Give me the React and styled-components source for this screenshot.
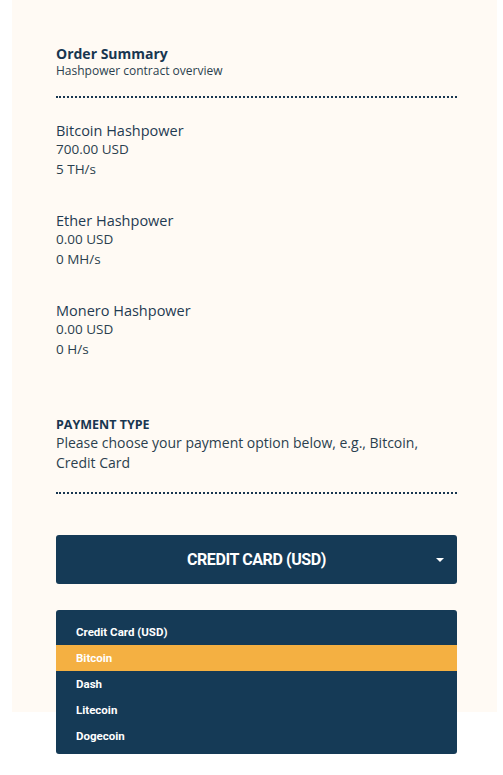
import styled, { createGlobalStyle } from 'styled-components';

const GlobalStyle = createGlobalStyle`
    body {
        margin: 0;
        background: #ffffff;
        font-family: "Open Sans", "Liberation Sans", sans-serif;
    }
`;

// cream card stops at 712px, the open menu hangs below it
const Panel = styled.div`
    margin-left: 12px;
    width: 485px;
    box-sizing: border-box;
    padding: 45px 40px 21px 44px;
    background: linear-gradient(to bottom, #fffaf4 712px, #ffffff 712px);
    color: #1c3a50;
`;

const Title = styled.div`
    font-size: 14px;
    line-height: 18px;
    font-weight: 700;
    color: #183650;
`;

const Subtitle = styled.div`
    font-size: 12px;
    line-height: 15px;
    color: #2b3f4e;
`;

const Dotted = styled.div`
    margin-top: ${(p) => p.$top || 19}px;
    border-bottom: 2px dotted #183650;
`;

const Items = styled.div`
    display: flex;
    flex-direction: column;
    gap: 34px;
    margin-top: 25px;
`;

const Item = styled.div`
    .name {
        font-size: 14.5px;
        line-height: 16px;
        color: #1f3b52;
    }

    .value {
        font-size: 13.5px;
        line-height: 20px;
        color: #2b3f4e;
    }
`;

const PaymentHead = styled.div`
    margin-top: 58px;

    .label {
        font-size: 12.5px;
        line-height: 16px;
        font-weight: 700;
        color: #183650;
    }

    .desc {
        font-size: 14px;
        line-height: 20px;
        color: #2b3f4e;
    }
`;

const Select = styled.div`
    position: relative;
    margin-top: 41px;
    height: 49px;
    border-radius: 3px;
    background: #153a56;
    display: flex;
    align-items: center;
    justify-content: center;
    color: #ffffff;
    font-family: Roboto, "Liberation Sans", sans-serif;
    font-size: 16px;
    font-weight: 700;
    letter-spacing: -0.4px;

    &::after {
        content: "";
        position: absolute;
        right: 13px;
        top: 23px;
        border-left: 4px solid transparent;
        border-right: 4px solid transparent;
        border-top: 4px solid #ffffff;
    }
`;

const Menu = styled.ul`
    list-style: none;
    margin: 26px 0 0;
    padding: 9px 0 5px;
    border-radius: 3px;
    background: #153a56;
`;

const Option = styled.li`
    height: 26px;
    display: flex;
    align-items: center;
    padding-left: 20px;
    color: #ffffff;
    font-family: Roboto, "Liberation Sans", sans-serif;
    font-size: 11.5px;
    font-weight: 700;
    background: ${(p) => (p.$active ? '#f4b042' : 'transparent')};
`;

const hashpower = [
    { name: 'Bitcoin Hashpower', price: '700.00 USD', rate: '5 TH/s' },
    { name: 'Ether Hashpower', price: '0.00 USD', rate: '0 MH/s' },
    { name: 'Monero Hashpower', price: '0.00 USD', rate: '0 H/s' },
];

const options = ['Credit Card (USD)', 'Bitcoin', 'Dash', 'Litecoin', 'Dogecoin'];

const App = () => {
    return (
        <>
            <GlobalStyle />
            <Panel>
                <Title>Order Summary</Title>
                <Subtitle>Hashpower contract overview</Subtitle>
                <Dotted $top={18} />
                <Items>
                    {hashpower.map((h) => (
                        <Item key={h.name}>
                            <div className="name">{h.name}</div>
                            <div className="value">{h.price}</div>
                            <div className="value">{h.rate}</div>
                        </Item>
                    ))}
                </Items>
                <PaymentHead>
                    <div className="label">PAYMENT TYPE</div>
                    <div className="desc">Please choose your payment option below, e.g., Bitcoin, Credit Card</div>
                </PaymentHead>
                <Dotted />
                <Select>CREDIT CARD (USD)</Select>
                <Menu>
                    {options.map((o) => (
                        <Option key={o} $active={o === 'Bitcoin'}>{o}</Option>
                    ))}
                </Menu>
            </Panel>
        </>
    );
};

export default App;
